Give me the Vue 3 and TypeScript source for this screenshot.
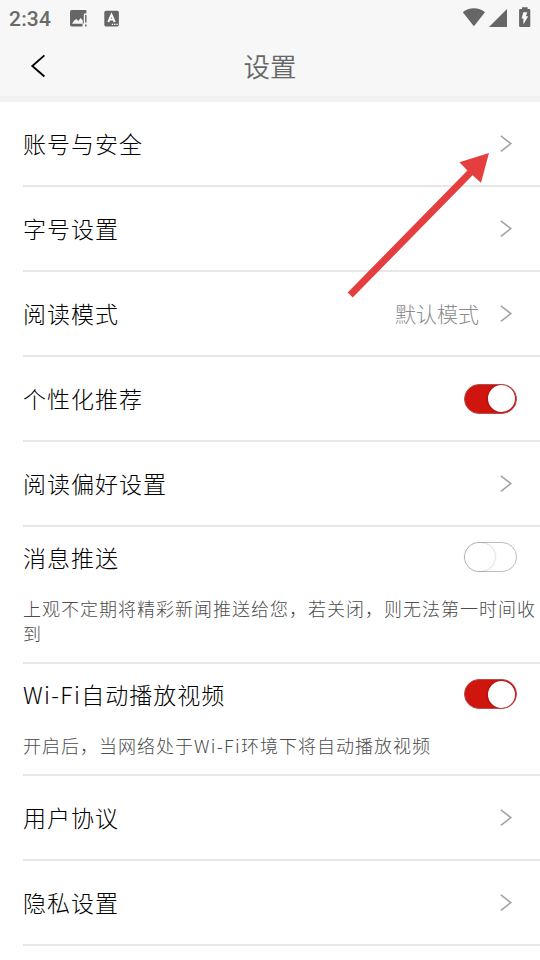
<script setup lang="ts">
interface SettingItem {
  label: string
  kind: 'link' | 'switch'
  value?: string
  on?: boolean
  note?: string
}

interface Run {
  text: string
  latin: boolean
}

const items: SettingItem[] = [
  { label: '账号与安全', kind: 'link' },
  { label: '字号设置', kind: 'link' },
  { label: '阅读模式', kind: 'link', value: '默认模式' },
  { label: '个性化推荐', kind: 'switch', on: true },
  { label: '阅读偏好设置', kind: 'link' },
  {
    label: '消息推送',
    kind: 'switch',
    on: false,
    note: '上观不定期将精彩新闻推送给您，若关闭，则无法第一时间收到',
  },
  {
    label: 'Wi-Fi自动播放视频',
    kind: 'switch',
    on: true,
    note: '开启后，当网络处于Wi-Fi环境下将自动播放视频',
  },
  { label: '用户协议', kind: 'link' },
  { label: '隐私设置', kind: 'link' },
]

// Latin words get slightly wider tracking than the Chinese text around them.
function runs(text: string): Run[] {
  return text
    .split(/([A-Za-z-]+)/)
    .filter((part) => part.length > 0)
    .map((part) => ({ text: part, latin: /^[A-Za-z-]+$/.test(part) }))
}
</script>

<template>
  <div class="screen">
    <header class="top">
      <div class="status">
        <span class="clock">2:34</span>
        <svg class="picture" width="20" height="20" viewBox="0 0 20 20">
          <path
            fill="#666"
            fill-rule="evenodd"
            d="M2.8 1H17.4V4.6H14.8V14.6H13.5V17.6H2.8Q1 17.6 1 15.8V2.8Q1 1 2.8 1ZM3 14.8H13.8V11.6L11.6 9L9.3 12L7.3 10L5 11.8Z"
          />
          <path fill="#777" d="M16 6H17.6V13.5H16ZM16 15.5H17.6V17.4H16Z" />
        </svg>
        <svg class="letter" width="16" height="18" viewBox="0 0 16 18">
          <rect x="0.3" y="0.8" width="14.6" height="15.6" rx="1.6" fill="#666" />
          <path
            fill="none"
            stroke="#fff"
            stroke-width="1.9"
            d="M4.3 12L7.5 4.6L10.7 12M5.3 9.6H9.7"
          />
          <path fill="#fff" d="M7.8 13.8h1.3v1.2h-1.3zM10.1 13.8h1.3v1.2h-1.3zM12.4 13.8h1.3v1.2h-1.3z" />
        </svg>
        <div class="system">
          <svg class="wifi" width="24" height="20" viewBox="0 0 24 20">
            <path fill="#666" d="M0.8 5.2Q5.5 1.2 11.9 1.2T23 5.2L11.9 19.2Z" />
          </svg>
          <svg class="signal" width="19" height="19" viewBox="0 0 19 19">
            <path fill="#666" d="M0 18L18 0V18Z" />
          </svg>
          <svg class="battery" width="12" height="21" viewBox="0 0 12 21">
            <path
              fill="#666"
              d="M3 0.2H8.6V2.1H10.2Q11.3 2.1 11.3 3.2V19Q11.3 20.1 10.2 20.1H1.2Q0.1 20.1 0.1 19V3.2Q0.1 2.1 1.2 2.1H3Z"
            />
            <path fill="#f7f7f7" d="M4.3 5.2H8.3L6.9 9.3H9.2L4.4 17.5V11.6H2.6Z" />
          </svg>
        </div>
      </div>
      <div class="navbar">
        <svg class="back" width="16" height="24" viewBox="0 0 16 24">
          <path fill="none" stroke="#000" stroke-width="1.9" d="M14.4 1.4L2.3 12L14.4 22.5" />
        </svg>
        <h1 class="title">设置</h1>
      </div>
    </header>

    <main class="list">
      <section v-for="item in items" :key="item.label" class="item" :class="{ tall: item.note }">
        <div class="row">
          <span class="label"
            ><span v-for="(run, i) in runs(item.label)" :key="i" :class="{ latin: run.latin }">{{ run.text }}</span></span
          >
          <span v-if="item.value" class="value">{{ item.value }}</span>
          <svg v-if="item.kind === 'link'" class="chevron" width="13" height="18" viewBox="0 0 13 18">
            <path fill="none" stroke="#a3a3a3" stroke-width="1.6" d="M0.9 0.9L10.8 8.6L0.9 16.3" />
          </svg>
          <span v-else class="switch" :class="{ on: item.on }"><i class="knob"></i></span>
        </div>
        <p v-if="item.note" class="note"
          ><span v-for="(run, i) in runs(item.note)" :key="i" :class="{ latin: run.latin }">{{ run.text }}</span></p
        >
      </section>
    </main>

    <svg class="pointer" width="146" height="148" viewBox="0 0 146 148">
      <path fill="#e53e3e" d="M142 0L134 29.8L125.6 22.2L5.7 144.6L0.7 139.6L120.4 17.4L112.4 9.3Z" />
    </svg>
  </div>
</template>

<style>
body {
  background: #fff;
}
</style>

<style scoped>
.screen {
  position: relative;
  width: 540px;
  height: 960px;
  overflow: hidden;
  background: #fff;
  font-family: 'Noto Sans CJK SC', sans-serif;
  font-weight: 300;
}
.top {
  box-sizing: border-box;
  height: 102px;
  background: #f7f7f7;
  border-bottom: 6px solid #f1f1f1;
}
.status {
  display: flex;
  align-items: flex-start;
  height: 36px;
  padding-left: 9px;
}
.clock {
  width: 60px;
  padding-top: 7px;
  font: 500 21px/24px Roboto, sans-serif;
  letter-spacing: 0.2px;
  color: #6a6a6a;
}
.picture {
  margin-top: 9px;
}
.letter {
  margin: 10px 0 0 15px;
}
.system {
  display: flex;
  margin-left: auto;
  padding-right: 9px;
}
.wifi {
  margin-top: 7px;
}
.signal {
  margin: 9px 0 0 3px;
}
.battery {
  margin: 7px 0 0 11px;
}
.navbar {
  display: grid;
  grid-template-columns: 48px 1fr 48px;
  align-items: center;
  height: 60px;
}
.back {
  margin-left: 30px;
}
.title {
  margin: 0;
  padding-bottom: 1px;
  text-align: center;
  font-size: 26.5px;
  line-height: 40px;
  font-weight: 350;
  color: #666;
}
.item {
  box-sizing: border-box;
  height: 85px;
  margin-left: 23px;
  border-bottom: 2px solid #e7e7e7;
}
.item.tall {
  height: auto;
}
.row {
  display: flex;
  align-items: center;
  height: 83px;
  padding-right: 23px;
}
.tall .row {
  height: 60px;
}
.label {
  flex: 1;
  padding-bottom: 1px;
  font-size: 23px;
  letter-spacing: 1px;
  line-height: 34px;
  color: #000;
}
.latin {
  letter-spacing: 1.35px;
}
.value {
  margin-right: 21px;
  padding-bottom: 1px;
  font-size: 21px;
  line-height: 30px;
  color: #8c8c8c;
}
.chevron {
  margin-right: 4px;
}
.switch {
  box-sizing: border-box;
  display: flex;
  align-items: center;
  width: 53px;
  height: 30px;
  border: 1px solid #bdbdbd;
  border-radius: 15px;
  background: #fff;
}
.switch.on {
  justify-content: flex-end;
  padding-right: 1.5px;
  border-color: #b1514e;
  background: #d0140e;
}
.knob {
  width: 30px;
  height: 28px;
  border-radius: 14px;
  background: #fff;
  box-shadow: 0 0 2px rgba(0, 0, 0, 0.35);
}
.on .knob {
  width: 27px;
  height: 27px;
  box-shadow: -1px 0 2px rgba(80, 0, 0, 0.3);
}
.note {
  margin: 0;
  padding: 9px 0 16px;
  font-size: 18px;
  letter-spacing: 1px;
  line-height: 25px;
  color: #4c4c4c;
}
.pointer {
  position: absolute;
  left: 347px;
  top: 153px;
}
</style>
